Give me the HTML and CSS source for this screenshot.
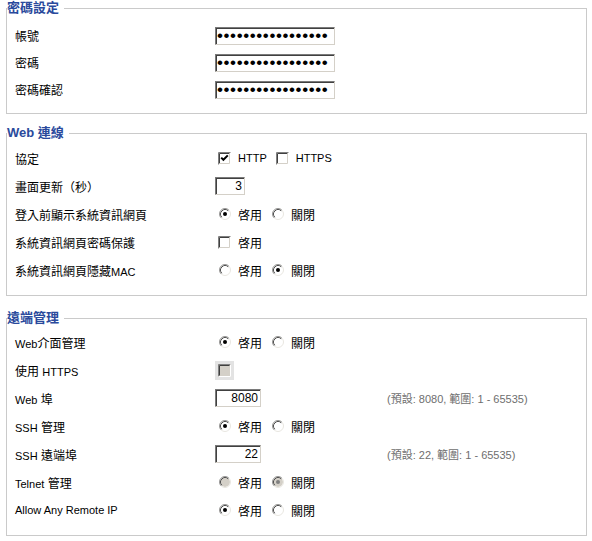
FILE: index.html
```html
<!DOCTYPE html>
<html lang="zh-TW">
<head>
    <meta charset="UTF-8">
    <meta name="viewport" content="width=device-width, initial-scale=1.0">
    <title>系統設定</title>
    <link rel="stylesheet" href="styles.css">
</head>
<body>
    <svg class="sprites" xmlns="http://www.w3.org/2000/svg">
        <symbol id="box" viewBox="0 0 13 13">
            <rect x="0" y="0" width="13" height="13" fill="#fff"/>
            <path d="M0.5 12.5 V0.5 H12.5" fill="none" stroke="#808080"/>
            <path d="M1.5 11.5 V1.5 H11.5" fill="none" stroke="#404040"/>
            <path d="M1.5 11.5 H11.5 V1.5" fill="none" stroke="#d4d0c8"/>
        </symbol>
        <symbol id="tick" viewBox="0 0 13 13">
            <path d="M3.2 5.6 L5.4 7.8 L9.8 3.4" fill="none" stroke="#000" stroke-width="2"/>
        </symbol>
        <symbol id="ring" viewBox="0 0 12 12">
            <circle cx="6" cy="6" r="5.5" fill="none" stroke="#e8e6e0"/>
            <path d="M2.11 9.89 A5.5 5.5 0 0 1 9.89 2.11" fill="none" stroke="#9a9a9a"/>
            <path d="M2.82 9.18 A4.5 4.5 0 0 1 9.18 2.82" fill="none" stroke="#505050"/>
        </symbol>
    </svg>

    <fieldset class="group first">
        <legend>密碼設定</legend>
        <div class="row">
            <div class="label">帳號</div>
            <div class="field"><input class="text pass" type="password" value="administrator1234"></div>
        </div>
        <div class="row">
            <div class="label">密碼</div>
            <div class="field"><input class="text pass" type="password" value="administrator1234"></div>
        </div>
        <div class="row">
            <div class="label">密碼確認</div>
            <div class="field"><input class="text pass" type="password" value="administrator1234"></div>
        </div>
    </fieldset>

    <fieldset class="group second">
        <legend>Web 連線</legend>
        <div class="row">
            <div class="label">協定</div>
            <div class="field">
                <label class="opt">
                    <svg class="cb" width="13" height="13"><use href="#box"/><use href="#tick"/></svg>
                    <span class="en">HTTP</span>
                </label>
                <label class="opt">
                    <svg class="cb" width="13" height="13"><use href="#box"/></svg>
                    <span class="en">HTTPS</span>
                </label>
            </div>
        </div>
        <div class="row">
            <div class="label">畫面更新（秒）</div>
            <div class="field"><input class="text num short" type="text" value="3"></div>
        </div>
        <div class="row">
            <div class="label">登入前顯示系統資訊網頁</div>
            <div class="field">
                <label class="opt">
                    <svg class="rb" width="12" height="12" viewBox="0 0 12 12"><circle cx="6" cy="6" r="5" fill="#fff"/><use href="#ring"/><circle cx="6" cy="6" r="2" fill="#000"/></svg>
                    啓用
                </label>
                <label class="opt">
                    <svg class="rb" width="12" height="12" viewBox="0 0 12 12"><circle cx="6" cy="6" r="5" fill="#fff"/><use href="#ring"/></svg>
                    關閉
                </label>
            </div>
        </div>
        <div class="row">
            <div class="label">系統資訊網頁密碼保護</div>
            <div class="field">
                <label class="opt">
                    <svg class="cb" width="13" height="13"><use href="#box"/></svg>
                    啓用
                </label>
            </div>
        </div>
        <div class="row">
            <div class="label">系統資訊網頁隱藏<span class="en">MAC</span></div>
            <div class="field">
                <label class="opt">
                    <svg class="rb" width="12" height="12" viewBox="0 0 12 12"><circle cx="6" cy="6" r="5" fill="#fff"/><use href="#ring"/></svg>
                    啓用
                </label>
                <label class="opt">
                    <svg class="rb" width="12" height="12" viewBox="0 0 12 12"><circle cx="6" cy="6" r="5" fill="#fff"/><use href="#ring"/><circle cx="6" cy="6" r="2" fill="#000"/></svg>
                    關閉
                </label>
            </div>
        </div>
    </fieldset>

    <fieldset class="group third">
        <legend>遠端管理</legend>
        <div class="row">
            <div class="label"><span class="en">Web</span>介面管理</div>
            <div class="field">
                <label class="opt">
                    <svg class="rb" width="12" height="12" viewBox="0 0 12 12"><circle cx="6" cy="6" r="5" fill="#fff"/><use href="#ring"/><circle cx="6" cy="6" r="2" fill="#000"/></svg>
                    啓用
                </label>
                <label class="opt">
                    <svg class="rb" width="12" height="12" viewBox="0 0 12 12"><circle cx="6" cy="6" r="5" fill="#fff"/><use href="#ring"/></svg>
                    關閉
                </label>
            </div>
        </div>
        <div class="row">
            <div class="label">使用 <span class="en">HTTPS</span></div>
            <div class="field">
                <svg class="cb-off" width="19" height="19" viewBox="0 0 19 19">
                    <rect x="0" y="0" width="19" height="19" fill="#e3e3e3"/>
                    <rect x="3" y="3" width="13" height="13" fill="#d4d0c8"/>
                    <path d="M3.5 15.5 V3.5 H15.5" fill="none" stroke="#808080"/>
                    <path d="M4.5 14.5 V4.5 H14.5" fill="none" stroke="#404040"/>
                    <path d="M3.5 15.5 H15.5 V3.5" fill="none" stroke="#fff"/>
                </svg>
            </div>
        </div>
        <div class="row">
            <div class="label"><span class="en">Web</span> 埠</div>
            <div class="field"><input class="text num port" type="text" value="8080"></div>
            <div class="hint">(預設: 8080, 範圍: 1 - 65535)</div>
        </div>
        <div class="row">
            <div class="label"><span class="en">SSH</span> 管理</div>
            <div class="field">
                <label class="opt">
                    <svg class="rb" width="12" height="12" viewBox="0 0 12 12"><circle cx="6" cy="6" r="5" fill="#fff"/><use href="#ring"/><circle cx="6" cy="6" r="2" fill="#000"/></svg>
                    啓用
                </label>
                <label class="opt">
                    <svg class="rb" width="12" height="12" viewBox="0 0 12 12"><circle cx="6" cy="6" r="5" fill="#fff"/><use href="#ring"/></svg>
                    關閉
                </label>
            </div>
        </div>
        <div class="row">
            <div class="label"><span class="en">SSH</span> 遠端埠</div>
            <div class="field"><input class="text num port" type="text" value="22"></div>
            <div class="hint">(預設: 22, 範圍: 1 - 65535)</div>
        </div>
        <div class="row">
            <div class="label"><span class="en">Telnet</span> 管理</div>
            <div class="field">
                <label class="opt">
                    <svg class="rb" width="12" height="12" viewBox="0 0 12 12"><circle cx="6" cy="6" r="5" fill="#d4d0c8"/><use href="#ring"/></svg>
                    啓用
                </label>
                <label class="opt">
                    <svg class="rb" width="12" height="12" viewBox="0 0 12 12"><circle cx="6" cy="6" r="5" fill="#d4d0c8"/><use href="#ring"/><circle cx="6" cy="6" r="2" fill="#808080"/></svg>
                    關閉
                </label>
            </div>
        </div>
        <div class="row">
            <div class="label"><span class="en">Allow Any Remote IP</span></div>
            <div class="field">
                <label class="opt">
                    <svg class="rb" width="12" height="12" viewBox="0 0 12 12"><circle cx="6" cy="6" r="5" fill="#fff"/><use href="#ring"/><circle cx="6" cy="6" r="2" fill="#000"/></svg>
                    啓用
                </label>
                <label class="opt">
                    <svg class="rb" width="12" height="12" viewBox="0 0 12 12"><circle cx="6" cy="6" r="5" fill="#fff"/><use href="#ring"/></svg>
                    關閉
                </label>
            </div>
        </div>
    </fieldset>
</body>
</html>
```

FILE: styles.css
```css
body {
    margin: 0;
    background-color: #fff;
    color: #000;
    font-family: "Liberation Sans", "Noto Sans CJK TC", sans-serif;
    font-size: 12px;
}
.sprites {
    display: block;
    width: 0;
    height: 0;
    overflow: hidden;
}
.group {
    margin: 0 5px 0 6px;
    padding: 0;
    border: 1px solid #cacaca;
    min-width: 0;
}
.group legend {
    padding: 0 5px 0 0;
    color: #2a4a9c;
    font-weight: bold;
    font-size: 13px;
    line-height: 16px;
}
.group.first {
    padding: 6px 0 10px 0;
}
.group.first .row {
    height: 27px;
}
.group.second {
    margin-top: 11px;
    padding: 3px 0 11px 0;
}
.group.third {
    margin-top: 14px;
    padding: 2px 0 11px 0;
}
.row {
    display: grid;
    grid-template-columns: 200px 172px auto;
    align-items: center;
    height: 28px;
    padding-left: 8px;
}
.label {
    white-space: nowrap;
}
.en {
    font-size: 11px;
}
.field {
    display: flex;
    align-items: center;
}
.hint {
    color: #6e6e6e;
    font-size: 11px;
    white-space: nowrap;
}
.text {
    box-sizing: border-box;
    height: 18px;
    margin: 0;
    padding: 0 2px;
    border: 1px solid;
    border-color: #7a7a7a #d4d0c8 #d4d0c8 #7a7a7a;
    box-shadow: inset 1px 1px 0 #404040;
    background-color: #fff;
    color: #000;
    font-family: "Liberation Sans", sans-serif;
    font-size: 12px;
    outline: none;
}
.text.pass {
    width: 120px;
    padding: 0 1px;
    font-size: 17px;
    letter-spacing: 0.6px;
}
.text.num {
    text-align: right;
}
.text.short {
    width: 30px;
}
.text.port {
    width: 46px;
}
.opt {
    display: inline-flex;
    align-items: center;
    gap: 7px;
    margin-right: 6px;
}
.opt .cb {
    margin-left: 3px;
}
.opt .rb {
    margin-left: 4px;
}
.cb, .rb, .cb-off {
    display: block;
    flex-shrink: 0;
}
```
